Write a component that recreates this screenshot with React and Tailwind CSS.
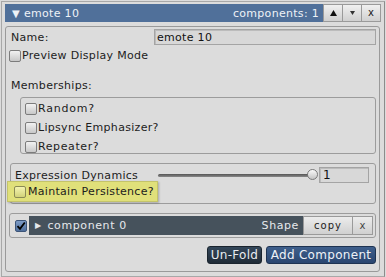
import React from 'react';

const Check = ({ checked = false, yellow = false }) => (
  <div
    className={`w-[12px] h-[12px] shrink-0 rounded-[2px] border flex items-center justify-center ${
      checked
        ? 'border-[#3c5478] bg-gradient-to-b from-[#7d9bc6] to-[#4f6f9c]'
        : yellow
        ? 'border-[#8a8a55] bg-gradient-to-b from-[#f4f4b0] to-[#d2d27a]'
        : 'border-[#7c7c7c] bg-gradient-to-b from-[#f2f2f2] to-[#c8c8c8]'
    }`}
  >
    {checked && (
      <svg width="10" height="10" viewBox="0 0 10 10">
        <path d="M1.5 5.2 L4 7.8 L8.8 1.5" stroke="#000" strokeWidth="1.8" fill="none" />
      </svg>
    )}
  </div>
);

const HeadBtn = ({ children }) => (
  <div className="w-[20px] h-[18px] border border-[#9a9a9a] -ml-px first:ml-0 bg-gradient-to-b from-[#f0f0f0] to-[#d0d0d0] flex items-center justify-center text-[10px] text-[#222]">
    {children}
  </div>
);

const App = () => {
  return (
    <div
      className="w-[386px] h-[277px] bg-[#dcdcdc] p-px text-[11px] leading-[13px] tracking-[0.3px] text-[#1c1c1c] overflow-hidden"
      style={{ fontFamily: '"DejaVu Sans", Verdana, sans-serif' }}
    >
      <div className="h-[276px] border border-[#a8a8a8] border-r-[#8c8c8c] pl-[3px] pr-[3px] pt-[2px] flex flex-col">
        {/* Header */}
        <div className="flex h-[18px] shrink-0">
          <div className="flex-1 bg-[#50709a] flex items-center justify-between pl-[7px] pr-[4px] text-[#eef2f7]">
            <span className="flex items-center gap-[4px]">
              <span className="text-[10px]">▼</span>
              <span>emote 10</span>
            </span>
            <span>components: 1</span>
          </div>
          <div className="flex">
            <HeadBtn>
              <svg width="7" height="6" viewBox="0 0 7 6"><path d="M3.5 0 L7 6 L0 6 Z" fill="#111" /></svg>
            </HeadBtn>
            <HeadBtn>
              <svg width="5" height="4" viewBox="0 0 5 4"><path d="M0 0 L5 0 L2.5 4 Z" fill="#333" /></svg>
            </HeadBtn>
            <HeadBtn>
              <span className="text-[10px] leading-none">x</span>
            </HeadBtn>
          </div>
        </div>

        {/* Content panel */}
        <div className="mt-[4px] mr-[1px] h-[246px] border border-[#9a9a9a] rounded-[3px] flex flex-col pr-[3px]">
          {/* Name */}
          <div className="mt-[2px] h-[16px] flex items-center">
            <span className="pl-[5px] w-[148px]">Name:</span>
            <div className="flex-1 h-[16px] border border-[#a4a4a4] bg-[#d8d8d8] shadow-[inset_1px_1px_0_#bcbcbc] flex items-center pl-[2px] text-[#111]">
              emote 10
            </div>
          </div>

          {/* Preview */}
          <div className="mt-[4px] h-[13px] flex items-center pl-[3px] gap-[1px]">
            <Check />
            <span>Preview Display Mode</span>
          </div>

          {/* Memberships */}
          <div className="mt-[17px] h-[13px] pl-[5px]">Memberships:</div>
          <div className="mt-[5px] ml-[14px] h-[57px] border border-[#9c9c9c] rounded-[3px] flex flex-col pl-[4px] pt-[4px] gap-[6px]">
            <div className="h-[13px] flex items-center gap-[1px]">
              <Check />
              <span className="tracking-[0.8px]">Random?</span>
            </div>
            <div className="h-[13px] flex items-center gap-[1px]">
              <Check />
              <span>Lipsync Emphasizer?</span>
            </div>
            <div className="h-[13px] flex items-center gap-[1px]">
              <Check />
              <span className="tracking-[0.6px]">Repeater?</span>
            </div>
          </div>

          {/* Expression Dynamics */}
          <div className="relative mt-[9px] ml-[4px] h-[41px] border border-[#9c9c9c] rounded-[3px] flex pl-[4px] pt-[2px]">
            <div className="flex items-start w-full">
              <span className="w-[143px] pt-[3px]">Expression Dynamics</span>
              <div className="relative w-[158px] h-[18px] flex items-center">
                <div className="w-full h-[3px] rounded-full bg-gradient-to-b from-[#555] to-[#8a8a8a]" />
                <div className="absolute right-[-2px] top-[3px] w-[11px] h-[11px] rounded-full border border-[#7a7a7a] bg-gradient-to-b from-[#fafafa] to-[#c4c4c4]" />
              </div>
              <div className="ml-[3px] mt-[1px] w-[50px] h-[16px] border border-[#a4a4a4] bg-[#d8d8d8] shadow-[inset_1px_1px_0_#bcbcbc] pl-[3px] flex items-center text-[#111] text-[12px]">
                1
              </div>
            </div>
            <div className="absolute left-[-4px] top-[17px] w-[151px] h-[21px] bg-[#e0e07a] border border-[#c4c46a] shadow-[1px_1px_2px_rgba(0,0,0,0.25)] flex items-center pl-[6px] gap-[2px]">
              <Check yellow />
              <span>Maintain Persistence?</span>
            </div>
          </div>

          {/* Component row */}
          <div className="mt-[9px] ml-[3px] h-[25px] border border-[#9c9c9c] rounded-[3px] flex items-center pl-[5px]">
            <Check checked />
            <div className="ml-[2px] w-[274px] h-[19px] bg-[#46525c] flex items-center justify-between pl-[6px] pr-[4px] text-[#e6e9ec]">
              <span className="flex items-center gap-[6px]">
                <span className="text-[8px]">▶</span>
                <span className="tracking-[0.6px]">component 0</span>
              </span>
              <span className="tracking-[0.6px]">Shape</span>
            </div>
            <div className="w-[50px] h-[19px] border border-[#9a9a9a] bg-gradient-to-b from-[#ececec] to-[#d0d0d0] flex items-center justify-center text-[10px] tracking-[1px]">
              copy
            </div>
            <div className="-ml-px w-[21px] h-[19px] border border-[#9a9a9a] bg-gradient-to-b from-[#ececec] to-[#d0d0d0] flex items-center justify-center text-[10px] text-[#444]">
              x
            </div>
          </div>

          {/* Buttons */}
          <div className="mt-[8px] flex justify-end gap-[4px]">
            <div className="w-[55px] h-[18px] rounded-[3px] border border-[#1a242e] bg-gradient-to-b from-[#34475a] to-[#1f2b37] text-[#e8ecf0] flex items-center justify-center text-[12px]">
              Un-Fold
            </div>
            <div className="w-[110px] h-[18px] rounded-[3px] border border-[#1e3352] bg-gradient-to-b from-[#3e5f8c] to-[#2a4670] text-[#eef2f7] flex items-center justify-center text-[12px]">
              Add Component
            </div>
          </div>
        </div>
      </div>
    </div>
  );
};

export default App;
